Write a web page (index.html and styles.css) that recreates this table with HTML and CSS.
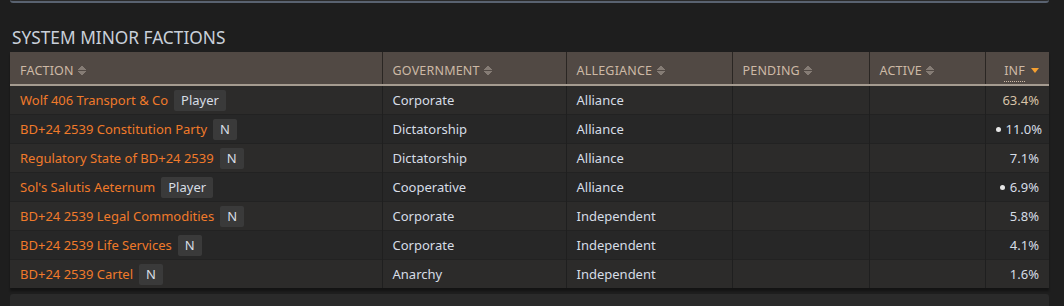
FILE: index.html
```html
<!DOCTYPE html>
<html>
<head>
<meta charset="utf-8">
<link rel="stylesheet" href="styles.css">
</head>
<body>
<div class="page">
  <div class="topbox"></div>
  <h2 class="title">SYSTEM MINOR FACTIONS</h2>
  <table class="factions">
    <colgroup>
      <col class="c1"><col class="c2"><col class="c3"><col class="c4"><col class="c5"><col class="c6">
    </colgroup>
    <thead>
      <tr>
        <th>FACTION <span class="sort"></span></th>
        <th>GOVERNMENT <span class="sort"></span></th>
        <th>ALLEGIANCE <span class="sort"></span></th>
        <th>PENDING <span class="sort"></span></th>
        <th>ACTIVE <span class="sort"></span></th>
        <th class="num"><span class="dotted">INF</span><span class="sortdown"></span></th>
      </tr>
    </thead>
    <tbody>
      <tr><td><div class="fac"><a>Wolf 406 Transport &amp; Co</a><span class="badge">Player</span></div></td><td>Corporate</td><td>Alliance</td><td></td><td></td><td class="num ctrl">63.4%</td></tr>
      <tr><td><div class="fac"><a>BD+24 2539 Constitution Party</a><span class="badge">N</span></div></td><td>Dictatorship</td><td>Alliance</td><td></td><td></td><td class="num"><span class="dot"></span>11.0%</td></tr>
      <tr><td><div class="fac"><a>Regulatory State of BD+24 2539</a><span class="badge">N</span></div></td><td>Dictatorship</td><td>Alliance</td><td></td><td></td><td class="num">7.1%</td></tr>
      <tr><td><div class="fac"><a>Sol's Salutis Aeternum</a><span class="badge">Player</span></div></td><td>Cooperative</td><td>Alliance</td><td></td><td></td><td class="num"><span class="dot"></span>6.9%</td></tr>
      <tr><td><div class="fac"><a>BD+24 2539 Legal Commodities</a><span class="badge">N</span></div></td><td>Corporate</td><td>Independent</td><td></td><td></td><td class="num">5.8%</td></tr>
      <tr><td><div class="fac"><a>BD+24 2539 Life Services</a><span class="badge">N</span></div></td><td>Corporate</td><td>Independent</td><td></td><td></td><td class="num">4.1%</td></tr>
      <tr><td><div class="fac"><a>BD+24 2539 Cartel</a><span class="badge">N</span></div></td><td>Anarchy</td><td>Independent</td><td></td><td></td><td class="num">1.6%</td></tr>
    </tbody>
  </table>
  <div class="nextbox"></div>
</div>
</body>
</html>
```
FILE: styles.css
```css
html, body {
  margin: 0;
  padding: 0;
  background: #1e1e1e;
  height: 306px;
  overflow: hidden;
}
body {
  font-family: "Noto Sans", "Open Sans", sans-serif;
  color: #d6dde6;
}
.page {
  padding: 0 15px 0 10px;
  width: 1039px;
  box-sizing: content-box;
}
.topbox {
  height: 2px;
  margin-top: -1px;
  background: #2a2a2a;
  border-bottom: 2px solid #596270;
  border-radius: 0 0 3px 3px;
}
.title {
  margin: 22px 0 0 2px;
  font-size: 17.3px;
  font-weight: 400;
  line-height: 26px;
  height: 27px;
  color: #c9d0da;
  letter-spacing: 0;
}
.factions {
  width: 1039px;
  border-collapse: collapse;
  table-layout: fixed;
  font-size: 13px;
  box-shadow: 0 3px 2px rgba(0,0,0,0.35);
}
.c1 { width: 372px; }
.c2 { width: 184px; }
.c3 { width: 166px; }
.c4 { width: 137px; }
.c5 { width: 116px; }
.c6 { width: 64px; }
thead th {
  background: #514944;
  color: #cdb9a6;
  font-weight: 400;
  font-size: 12.5px;
  text-align: left;
  height: 28px;
  padding: 4px 10px 0;
  border-left: 1px solid #2a2623;
  border-bottom: 2px solid #a59b90;
  letter-spacing: 0.2px;
  white-space: nowrap;
}
thead th:first-child { border-left: none; }
tbody td {
  height: 28px;
  padding: 0 10px;
  border-left: 1px solid #1f1f1f;
  border-top: 1px solid #222;
  white-space: nowrap;
}
tbody td:first-child { border-left: none; }
tbody tr:nth-child(odd) td { background: #2c2b2a; }
tbody tr:nth-child(even) td { background: #272727; }
.num { text-align: right; }
thead th.num { text-align: right; padding-right: 10px; }
.fac {
  display: flex;
  align-items: center;
  gap: 6px;
}
a {
  color: #f07a2a;
}
.badge {
  display: block;
  padding: 0 7px;
  height: 21px;
  line-height: 21px;
  background: #3a3a3a;
  border-radius: 2px;
  color: #d8dee6;
  font-size: 13px;
}
.sort {
  display: inline-block;
  width: 8px;
  height: 11px;
  vertical-align: -1px;
  margin-left: 1px;
  background:
    linear-gradient(to bottom right, transparent 49%, #857c75 51%) 0 0 / 4px 5px no-repeat,
    linear-gradient(to bottom left, transparent 49%, #857c75 51%) 4px 0 / 4px 5px no-repeat,
    linear-gradient(to top right, transparent 49%, #857c75 51%) 0 6px / 4px 5px no-repeat,
    linear-gradient(to top left, transparent 49%, #857c75 51%) 4px 6px / 4px 5px no-repeat;
}
.sortdown {
  display: inline-block;
  width: 0;
  height: 0;
  border-left: 4.5px solid transparent;
  border-right: 4.5px solid transparent;
  border-top: 5px solid #f5a030;
  vertical-align: 2px;
  margin-left: 6px;
}
.dotted {
  border-bottom: 1px dotted #cdb9a6;
  padding-bottom: 2px;
}
.ctrl { color: #d8c3a8; }
.dot {
  display: inline-block;
  width: 5px;
  height: 5px;
  border-radius: 50%;
  background: #e6e6e6;
  margin-right: 5px;
  vertical-align: 2px;
}
.nextbox {
  margin-top: 6px;
  height: 20px;
  background: #2a2a2a;
  border-radius: 3px 3px 0 0;
}
```
